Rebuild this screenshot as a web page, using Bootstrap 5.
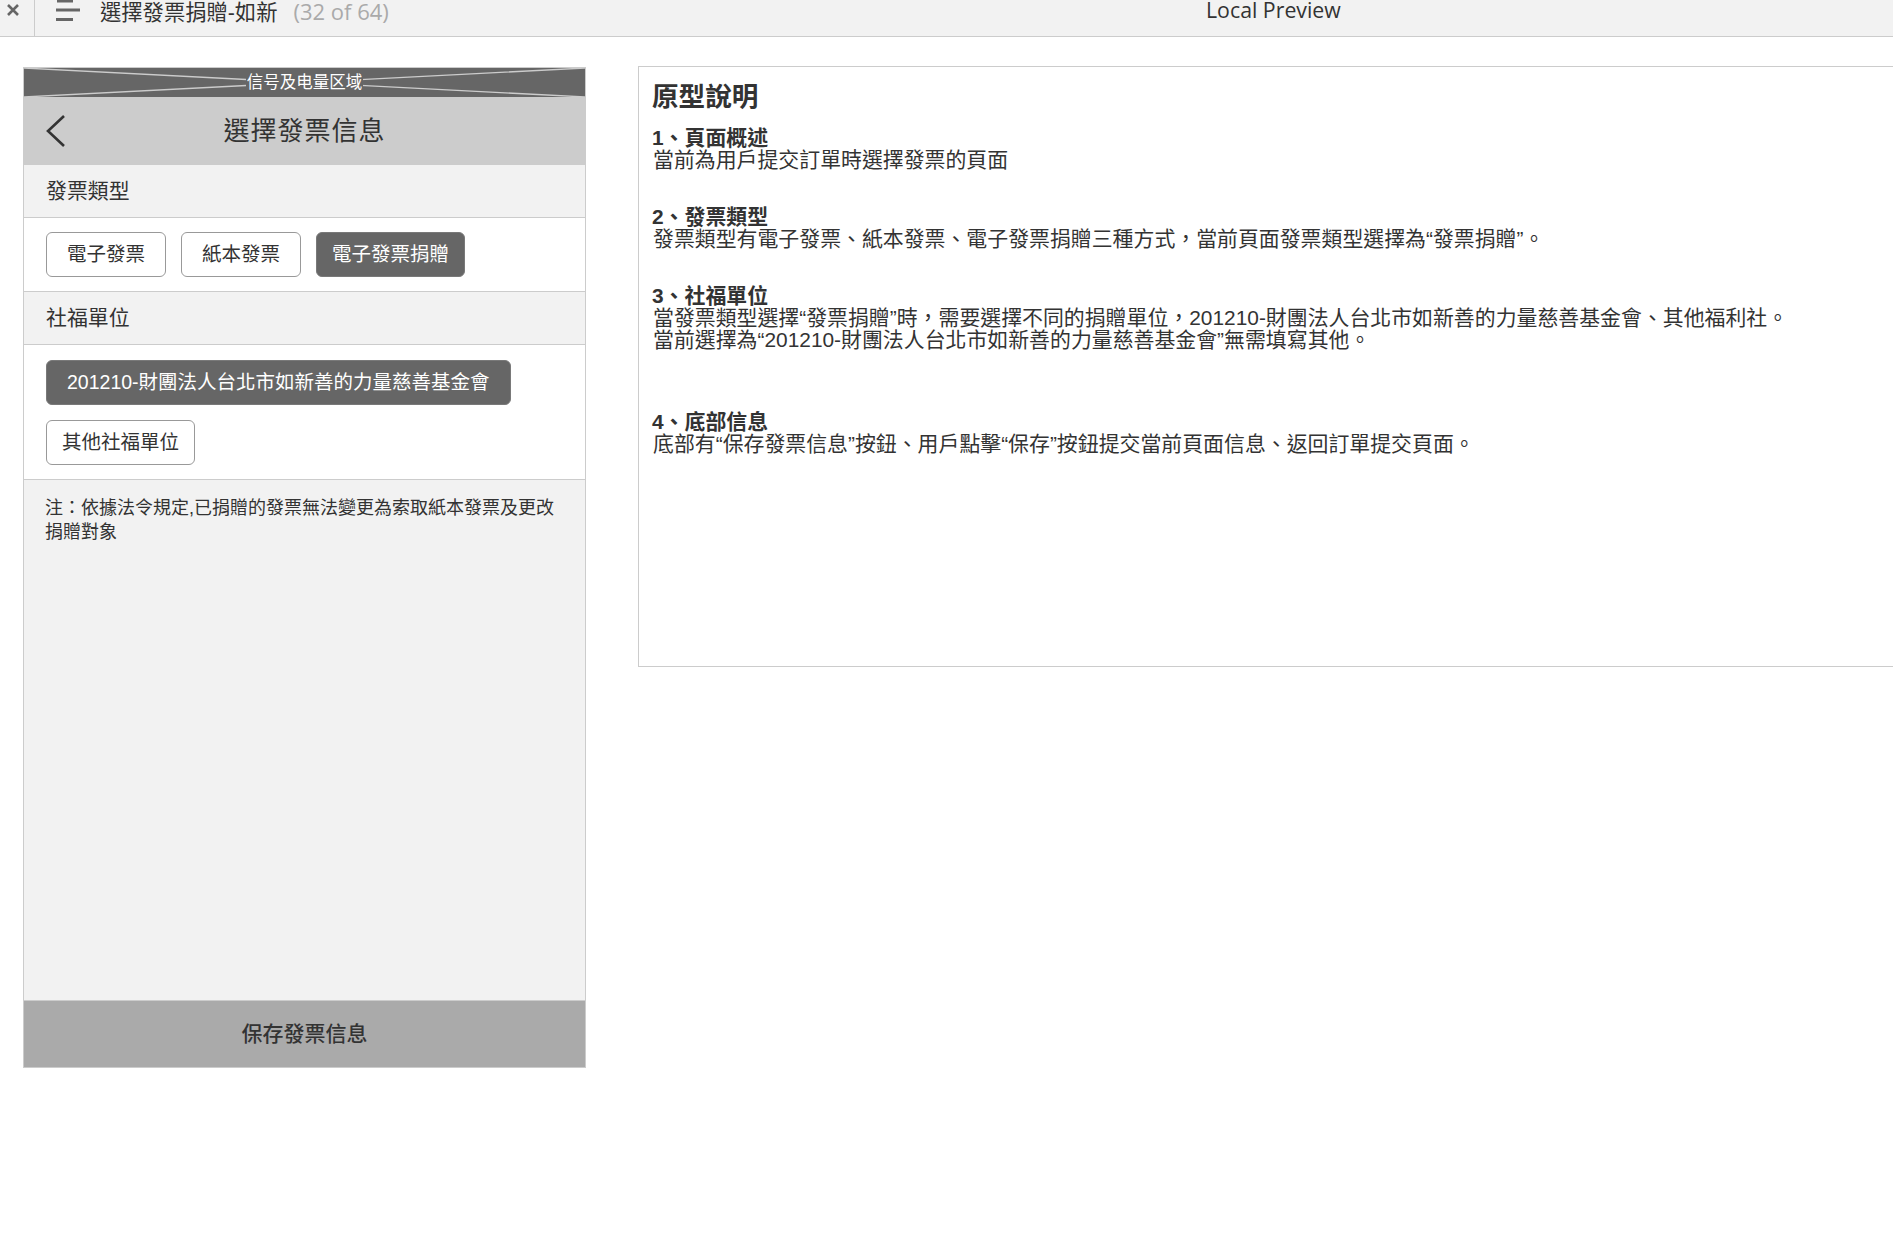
<!DOCTYPE html>
<html lang="zh-Hant">
<head>
    <meta charset="UTF-8">
    <meta name="viewport" content="width=device-width, initial-scale=1.0">
    <title>選擇發票捐贈-如新</title>
    <link href="https://cdn.jsdelivr.net/npm/bootstrap@5.3.0/dist/css/bootstrap.min.css" rel="stylesheet">
    <style>
        body {
            font-family: "Liberation Sans", "Noto Sans CJK SC", sans-serif;
            color: #333;
            overflow: hidden;
        }
        /* top bar */
        .topbar { height: 37px; background: #f2f2f2; border-bottom: 1px solid #ccc; overflow: hidden; }
        .close-cell { width: 35px; height: 36px; border-right: 1px solid #ccc; padding: 4px 0 0 7px; }
        .close-cell svg, .menu-cell svg { display: block; }
        .menu-cell { padding: 0 0 0 20px; width: 65px; }
        .page-name { font-size: 21.3px; line-height: 22px; color: #333; white-space: nowrap; width: 1106px; }
        .page-count { color: #aaa; margin-left: 16px; font-family: "Open Sans", sans-serif; font-size: 22px; }
        .preview-name { font-family: "Open Sans", sans-serif; font-size: 21.3px; line-height: 20px; color: #333; white-space: nowrap; }

        /* phone */
        .content-area { padding: 29px 0 0 23px; gap: 52px; }
        .phone { width: 563px; height: 1001px; margin-top: 1px; border: 1px solid #ccc; flex: none; background: #f2f2f2; }
        .status-strip { position: relative; height: 29px; background: #666; color: #fff; font-size: 16.5px; line-height: 29px; text-align: center; }
        .status-strip svg { position: absolute; inset: 0; width: 100%; height: 100%; }
        .status-strip span { position: relative; background: #666; padding: 0 1px; }
        .nav-strip { height: 68px; background: #ccc; padding-left: 22px; }
        .nav-title { font-size: 26px; letter-spacing: 1px; margin-right: 42px; }
        .sect-head { height: 53px; padding-left: 22px; font-size: 20.9px; line-height: 52px; border-bottom: 1px solid #ccc; }
        .sect-body { background: #fff; padding: 14px 22px; border-bottom: 1px solid #ccc; gap: 15px; }
        .sect-body.stacked { padding-top: 15px; }
        .opt-btn { height: 45px; border: 1px solid #999; border-radius: 6px; background: #fff; color: #333; font-size: 19.5px; padding: 0 20px; line-height: 1; }
        .opt-btn.tight { padding: 0 15px; }
        .opt-btn.picked, .opt-btn.picked:hover { background: #666; color: #fff; border-color: #797979; }
        .note-text { padding: 16px 22px 0 21px; font-size: 18px; line-height: 24px; flex: 1; }
        .save-bar { height: 67px; background: #aaa; border-top: 1px solid #ccc; font-size: 21px; font-weight: 500; color: #333; }

        /* notes panel */
        .spec-panel { width: 1400px; height: 601px; border: 1px solid #ccc; flex: none; padding: 10px 13px; font-size: 20.9px; line-height: 22px; }
        .spec-title { font-size: 26.6px; font-weight: bold; line-height: 40px; margin: 0 0 10px; }
        .spec-block { margin: 0 0 35px 1px; }
        .spec-block.wide-gap { margin-bottom: 60px; }
        .spec-block b { display: block; margin-left: -1px; }
    </style>
</head>
<body>
    <div class="topbar d-flex">
        <div class="close-cell">
            <svg width="12" height="12" viewBox="0 0 12 12"><path d="M1 1L11 11M11 1L1 11" stroke="#666" stroke-width="2.6" fill="none"/></svg>
        </div>
        <div class="menu-cell">
            <svg width="25" height="22" viewBox="0 0 25 22"><path d="M2 1h16M1 10h24M1 19.5h17" stroke="#666" stroke-width="3" fill="none"/></svg>
        </div>
        <div class="page-name">選擇發票捐贈-如新<span class="page-count">(32 of 64)</span></div>
        <div class="preview-name">Local Preview</div>
    </div>

    <div class="content-area d-flex">
        <div class="phone d-flex flex-column">
            <div class="status-strip">
                <svg viewBox="0 0 560 29" preserveAspectRatio="none"><path d="M0 0L560 29M0 29L560 0" stroke="#ccc" stroke-width="1.3" fill="none"/></svg>
                <span>信号及电量区域</span>
            </div>
            <div class="nav-strip d-flex align-items-center">
                <svg width="20" height="32" viewBox="0 0 20 32"><path d="M18 1L2 16L18 31" stroke="#333" stroke-width="2.6" fill="none"/></svg>
                <div class="nav-title flex-grow-1 text-center">選擇發票信息</div>
            </div>
            <div class="sect-head">發票類型</div>
            <div class="sect-body d-flex">
                <button class="opt-btn">電子發票</button>
                <button class="opt-btn">紙本發票</button>
                <button class="opt-btn tight picked">電子發票捐贈</button>
            </div>
            <div class="sect-head">社福單位</div>
            <div class="sect-body stacked d-flex flex-column align-items-start">
                <button class="opt-btn picked">201210-財團法人台北市如新善的力量慈善基金會</button>
                <button class="opt-btn tight">其他社福單位</button>
            </div>
            <div class="note-text">注：依據法令規定,已捐贈的發票無法變更為索取紙本發票及更改捐贈對象</div>
            <div class="save-bar d-flex align-items-center justify-content-center">保存發票信息</div>
        </div>

        <div class="spec-panel">
            <h1 class="spec-title">原型說明</h1>
            <div class="spec-block"><b>1、頁面概述</b>當前為用戶提交訂單時選擇發票的頁面</div>
            <div class="spec-block"><b>2、發票類型</b>發票類型有電子發票、紙本發票、電子發票捐贈三種方式，當前頁面發票類型選擇為“發票捐贈”。</div>
            <div class="spec-block wide-gap"><b>3、社福單位</b>當發票類型選擇“發票捐贈”時，需要選擇不同的捐贈單位，201210-財團法人台北市如新善的力量慈善基金會、其他福利社。<br>當前選擇為“201210-財團法人台北市如新善的力量慈善基金會”無需填寫其他。</div>
            <div class="spec-block"><b>4、底部信息</b>底部有“保存發票信息”按鈕、用戶點擊“保存”按鈕提交當前頁面信息、返回訂單提交頁面。</div>
        </div>
    </div>
    <script src="https://cdn.jsdelivr.net/npm/bootstrap@5.3.0/dist/js/bootstrap.bundle.min.js"></script>
</body>
</html>
